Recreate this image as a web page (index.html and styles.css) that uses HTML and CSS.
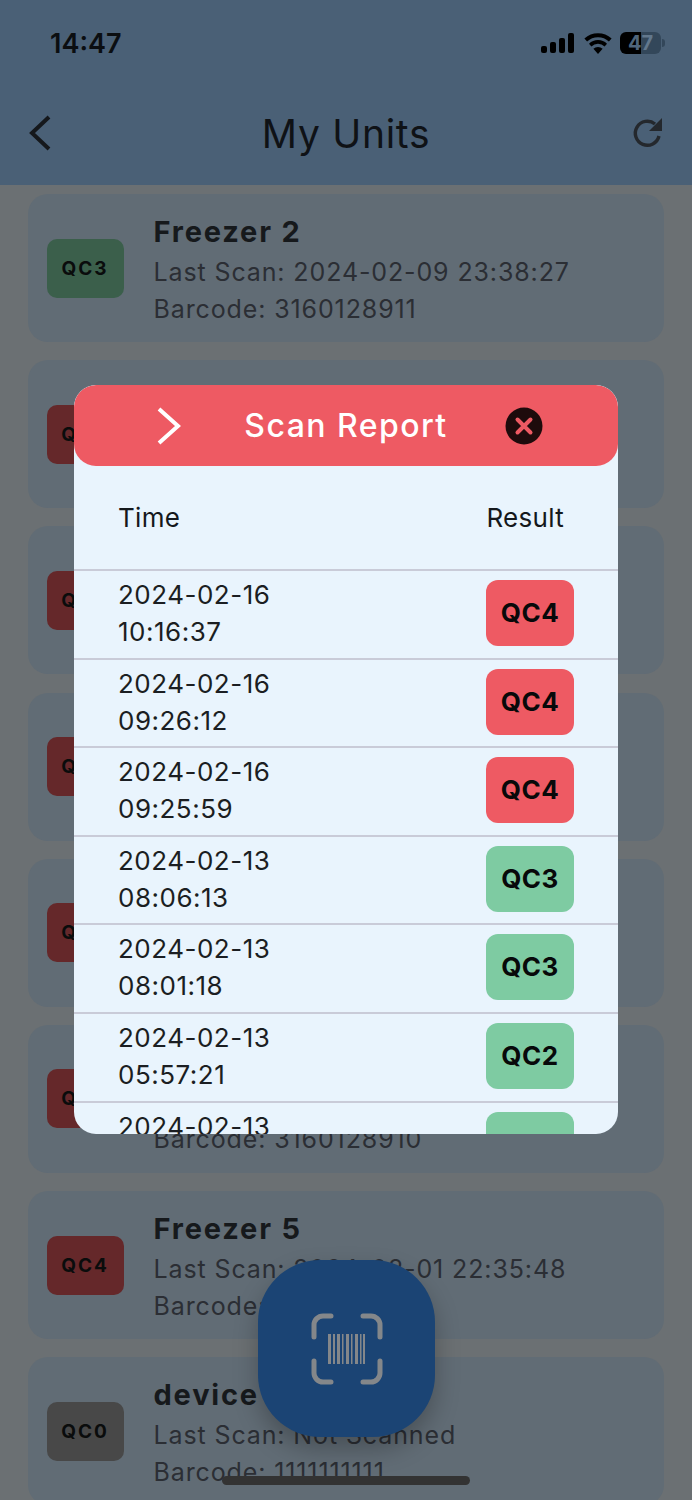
FILE: index.html
```html
<!DOCTYPE html>
<html>
<head>
<meta charset="utf-8">
<title>My Units</title>
<link rel="stylesheet" href="styles.css">
</head>
<body>
<div class="page">

  <div class="topbar">
    <div class="status">
      <span class="clock">14:47</span>
      <div class="status-icons">
        <svg class="signal" width="34" height="20" viewBox="0 0 34 20"><rect x="0" y="13" width="6" height="7" rx="2"/><rect x="9" y="9" width="6" height="11" rx="2"/><rect x="18" y="5" width="6" height="15" rx="2"/><rect x="27" y="0" width="6" height="20" rx="2"/></svg>
        <svg class="wifi" width="28" height="21" viewBox="0 0 28 21"><path d="M14 21l-4.6-5.2a6.6 6.6 0 0 1 9.2 0z"/><path d="M7.4 13.4L5 10.7a13 13 0 0 1 18 0l-2.4 2.7a9.4 9.4 0 0 0-13.2 0z"/><path d="M3.1 8.6L.4 5.6a20 20 0 0 1 27.2 0l-2.7 3a16 16 0 0 0-21.8 0z"/></svg>
        <div class="battery"><span class="lvl-a">4</span><span class="lvl-b">7</span></div>
        <div class="battery-nub"></div>
      </div>
    </div>
    <div class="titlebar">
      <svg class="back" width="32" height="36" viewBox="0 0 32 36"><path d="M21 2L4 18l17 16" fill="none" stroke="#15181c" stroke-width="4"/></svg>
      <h1>My Units</h1>
      <svg class="reload" width="32" height="32" viewBox="0 0 32 32"><path d="M27 19a12 12 0 1 1-4-12" fill="none" stroke="#24282d" stroke-width="3.4"/><path d="M30 1v13H17z" fill="#24282d"/></svg>
    </div>
  </div>

  <div class="units">
    <div class="unit">
      <div class="qc qc-green">QC3</div>
      <div class="info">
        <div class="name">Freezer 2</div>
        <div class="line">Last Scan: 2024-02-09 23:38:27</div>
        <div class="line">Barcode: 3160128911</div>
      </div>
    </div>
    <div class="unit"><div class="qc qc-red">QC4</div></div>
    <div class="unit"><div class="qc qc-red">QC4</div></div>
    <div class="unit"><div class="qc qc-red">QC4</div></div>
    <div class="unit"><div class="qc qc-red">QC4</div></div>
    <div class="unit">
      <div class="qc qc-red">QC4</div>
      <div class="info">
        <div class="name"></div>
        <div class="line"></div>
        <div class="line">Barcode: 3160128910</div>
      </div>
    </div>
    <div class="unit">
      <div class="qc qc-red">QC4</div>
      <div class="info">
        <div class="name">Freezer 5</div>
        <div class="line">Last Scan: 2024-02-01 22:35:48</div>
        <div class="line">Barcode: 3160128909</div>
      </div>
    </div>
    <div class="unit">
      <div class="qc qc-grey">QC0</div>
      <div class="info">
        <div class="name">device</div>
        <div class="line">Last Scan: Not Scanned</div>
        <div class="line">Barcode: 1111111111</div>
      </div>
    </div>
  </div>

  <div class="fab">
    <svg width="72" height="72" viewBox="0 0 72 72">
      <g fill="none" stroke="#84878a" stroke-width="5" stroke-linecap="round">
        <path d="M3 24V12a9 9 0 0 1 9-9h8"/>
        <path d="M52 3h8a9 9 0 0 1 9 9v12"/>
        <path d="M3 48v12a9 9 0 0 0 9 9h8"/>
        <path d="M69 48v12a9 9 0 0 1-9 9h-8"/>
      </g>
      <g fill="#84878a">
        <rect x="17" y="21" width="3" height="30"/><rect x="22" y="21" width="2" height="30"/><rect x="26" y="21" width="3" height="30"/><rect x="31" y="21" width="1.5" height="30"/><rect x="35" y="21" width="3" height="30"/><rect x="40" y="21" width="1.5" height="30"/><rect x="44" y="21" width="3" height="30"/><rect x="49" y="21" width="1.5" height="30"/><rect x="52" y="21" width="2" height="30"/>
      </g>
    </svg>
  </div>

  <div class="home-bar"></div>

  <div class="modal">
    <div class="modal-head">
      <svg class="chev" width="26" height="38" viewBox="0 0 26 38"><path d="M3 2l19 17L3 36" fill="none" stroke="#fff" stroke-width="4"/></svg>
      <h2>Scan Report</h2>
      <svg class="close" width="38" height="38" viewBox="0 0 38 38"><circle cx="19" cy="19" r="18.5" fill="#1e0b0c"/><path d="M12.5 12.5l13 13M25.500 12.500l-13 13" stroke="#ee5a63" stroke-width="4" stroke-linecap="round"/></svg>
    </div>
    <div class="report-head">
      <span>Time</span>
      <span class="result-col">Result</span>
    </div>
    <div class="report-row">
      <div class="when">2024-02-16<br>10:16:37</div>
      <div class="tag tag-red">QC4</div>
    </div>
    <div class="report-row">
      <div class="when">2024-02-16<br>09:26:12</div>
      <div class="tag tag-red">QC4</div>
    </div>
    <div class="report-row">
      <div class="when">2024-02-16<br>09:25:59</div>
      <div class="tag tag-red">QC4</div>
    </div>
    <div class="report-row">
      <div class="when">2024-02-13<br>08:06:13</div>
      <div class="tag tag-green">QC3</div>
    </div>
    <div class="report-row">
      <div class="when">2024-02-13<br>08:01:18</div>
      <div class="tag tag-green">QC3</div>
    </div>
    <div class="report-row">
      <div class="when">2024-02-13<br>05:57:21</div>
      <div class="tag tag-green">QC2</div>
    </div>
    <div class="report-row">
      <div class="when">2024-02-13<br></div>
      <div class="tag tag-green"></div>
    </div>
  </div>

</div>
</body>
</html>
```

FILE: styles.css
```css
* {
  box-sizing: border-box;
}

body {
  margin: 0;
  background-color: #6b7073;
  font-family: Inter, "Liberation Sans", sans-serif;
}

.page {
  position: relative;
  width: 692px;
  height: 1500px;
  overflow: hidden;
  background-color: #6b7073;
}

/* top bar */
.topbar {
  height: 185px;
  padding: 28px 27px 0 28px;
  background-color: #4a6076;
}

.status {
  display: flex;
  justify-content: space-between;
  align-items: center;
  height: 30px;
  padding-left: 22px;
}

.clock {
  font-size: 27px;
  font-weight: 600;
  color: #0b0e11;
}

.status-icons {
  display: flex;
  align-items: center;
}

.signal {
  margin-right: 9px;
  fill: #000;
}

.wifi {
  margin-right: 8px;
  fill: #000;
}

.battery {
  display: flex;
  justify-content: center;
  width: 41px;
  height: 22px;
  border-radius: 6px;
  font-size: 20px;
  font-weight: 700;
  line-height: 22px;
  background: linear-gradient(90deg, #000 0, #000 50%, #33475a 50%);
}

.lvl-a,
.lvl-b {
  color: #4f667c;
}

.lvl-b {
  color: #62788d;
}

.battery-nub {
  width: 3px;
  height: 8px;
  margin-left: 1px;
  border-radius: 0 3px 3px 0;
  background-color: #33475a;
}

.titlebar {
  display: flex;
  justify-content: space-between;
  align-items: center;
  height: 60px;
  margin-top: 45px;
  padding-right: 1px;
}

.titlebar h1 {
  margin: 0;
  font-size: 39px;
  font-weight: 400;
  letter-spacing: 0.7px;
  color: #0f1216;
}

/* unit list */
.units {
  display: flex;
  flex-direction: column;
  gap: 18.2px;
  padding: 9px 28px 0;
}

.unit {
  display: flex;
  flex-shrink: 0;
  align-items: center;
  height: 148px;
  padding-left: 18.5px;
  border-radius: 20px;
  background-color: #616c75;
}

.qc {
  flex-shrink: 0;
  width: 77px;
  height: 59px;
  border-radius: 10px;
  font-size: 19px;
  font-weight: 700;
  line-height: 59px;
  letter-spacing: 2px;
  text-align: center;
  color: #0a0c0c;
}

.qc-green {
  background-color: #3b5f4b;
}

.qc-red {
  background-color: #65282a;
}

.qc-grey {
  background-color: #484848;
}

.info {
  margin-top: 6px;
  margin-left: 30px;
}

.name {
  height: 39px;
  font-size: 29px;
  font-weight: 700;
  line-height: 34px;
  letter-spacing: 1.8px;
  color: #16191c;
}

.line {
  height: 37px;
  font-size: 25px;
  line-height: 37px;
  letter-spacing: 0.88px;
  color: #2b2e34;
}

/* scan button */
.fab {
  position: absolute;
  left: 258px;
  top: 1260px;
  display: flex;
  justify-content: center;
  align-items: center;
  width: 177px;
  height: 177px;
  border-radius: 62px;
  background-color: #1b4474;
  box-shadow: 0 12px 24px rgba(0, 0, 0, 0.25);
}

.home-bar {
  position: absolute;
  left: 222px;
  top: 1476px;
  width: 248px;
  height: 9px;
  border-radius: 5px;
  background-color: #333;
}

/* report dialog */
.modal {
  position: absolute;
  left: 74px;
  top: 385px;
  width: 544px;
  height: 749px;
  overflow: hidden;
  border-radius: 22px;
  background-color: #e9f4fd;
}

.modal-head {
  display: flex;
  justify-content: space-between;
  align-items: center;
  height: 81px;
  padding: 0 75px 0 82px;
  border-radius: 22px;
  background-color: #ee5a63;
}

.modal-head h2 {
  margin: 0 0 0 5px;
  font-size: 32px;
  font-weight: 500;
  letter-spacing: 1.45px;
  color: #fff;
}

.report-head {
  display: flex;
  justify-content: space-between;
  height: 103px;
  padding: 34px 54px 0 44px;
  font-size: 26px;
  line-height: 35px;
  letter-spacing: 0.3px;
  color: #15181c;
}

.report-row {
  display: flex;
  flex-shrink: 0;
  justify-content: space-between;
  height: 88.6px;
  padding: 9px 44px 0 45px;
  border-top: 2px solid #c9cbd8;
}

.when {
  margin-top: -4px;
  margin-left: -1px;
  font-size: 26px;
  line-height: 37px;
  letter-spacing: 0.5px;
  color: #1b1e22;
}

.tag {
  width: 88px;
  height: 66px;
  border-radius: 12px;
  font-size: 26px;
  font-weight: 700;
  line-height: 66px;
  letter-spacing: 0.5px;
  text-align: center;
  color: #08090a;
}

.tag-red {
  background-color: #ee5a63;
}

.tag-green {
  background-color: #7ecba2;
}
```
